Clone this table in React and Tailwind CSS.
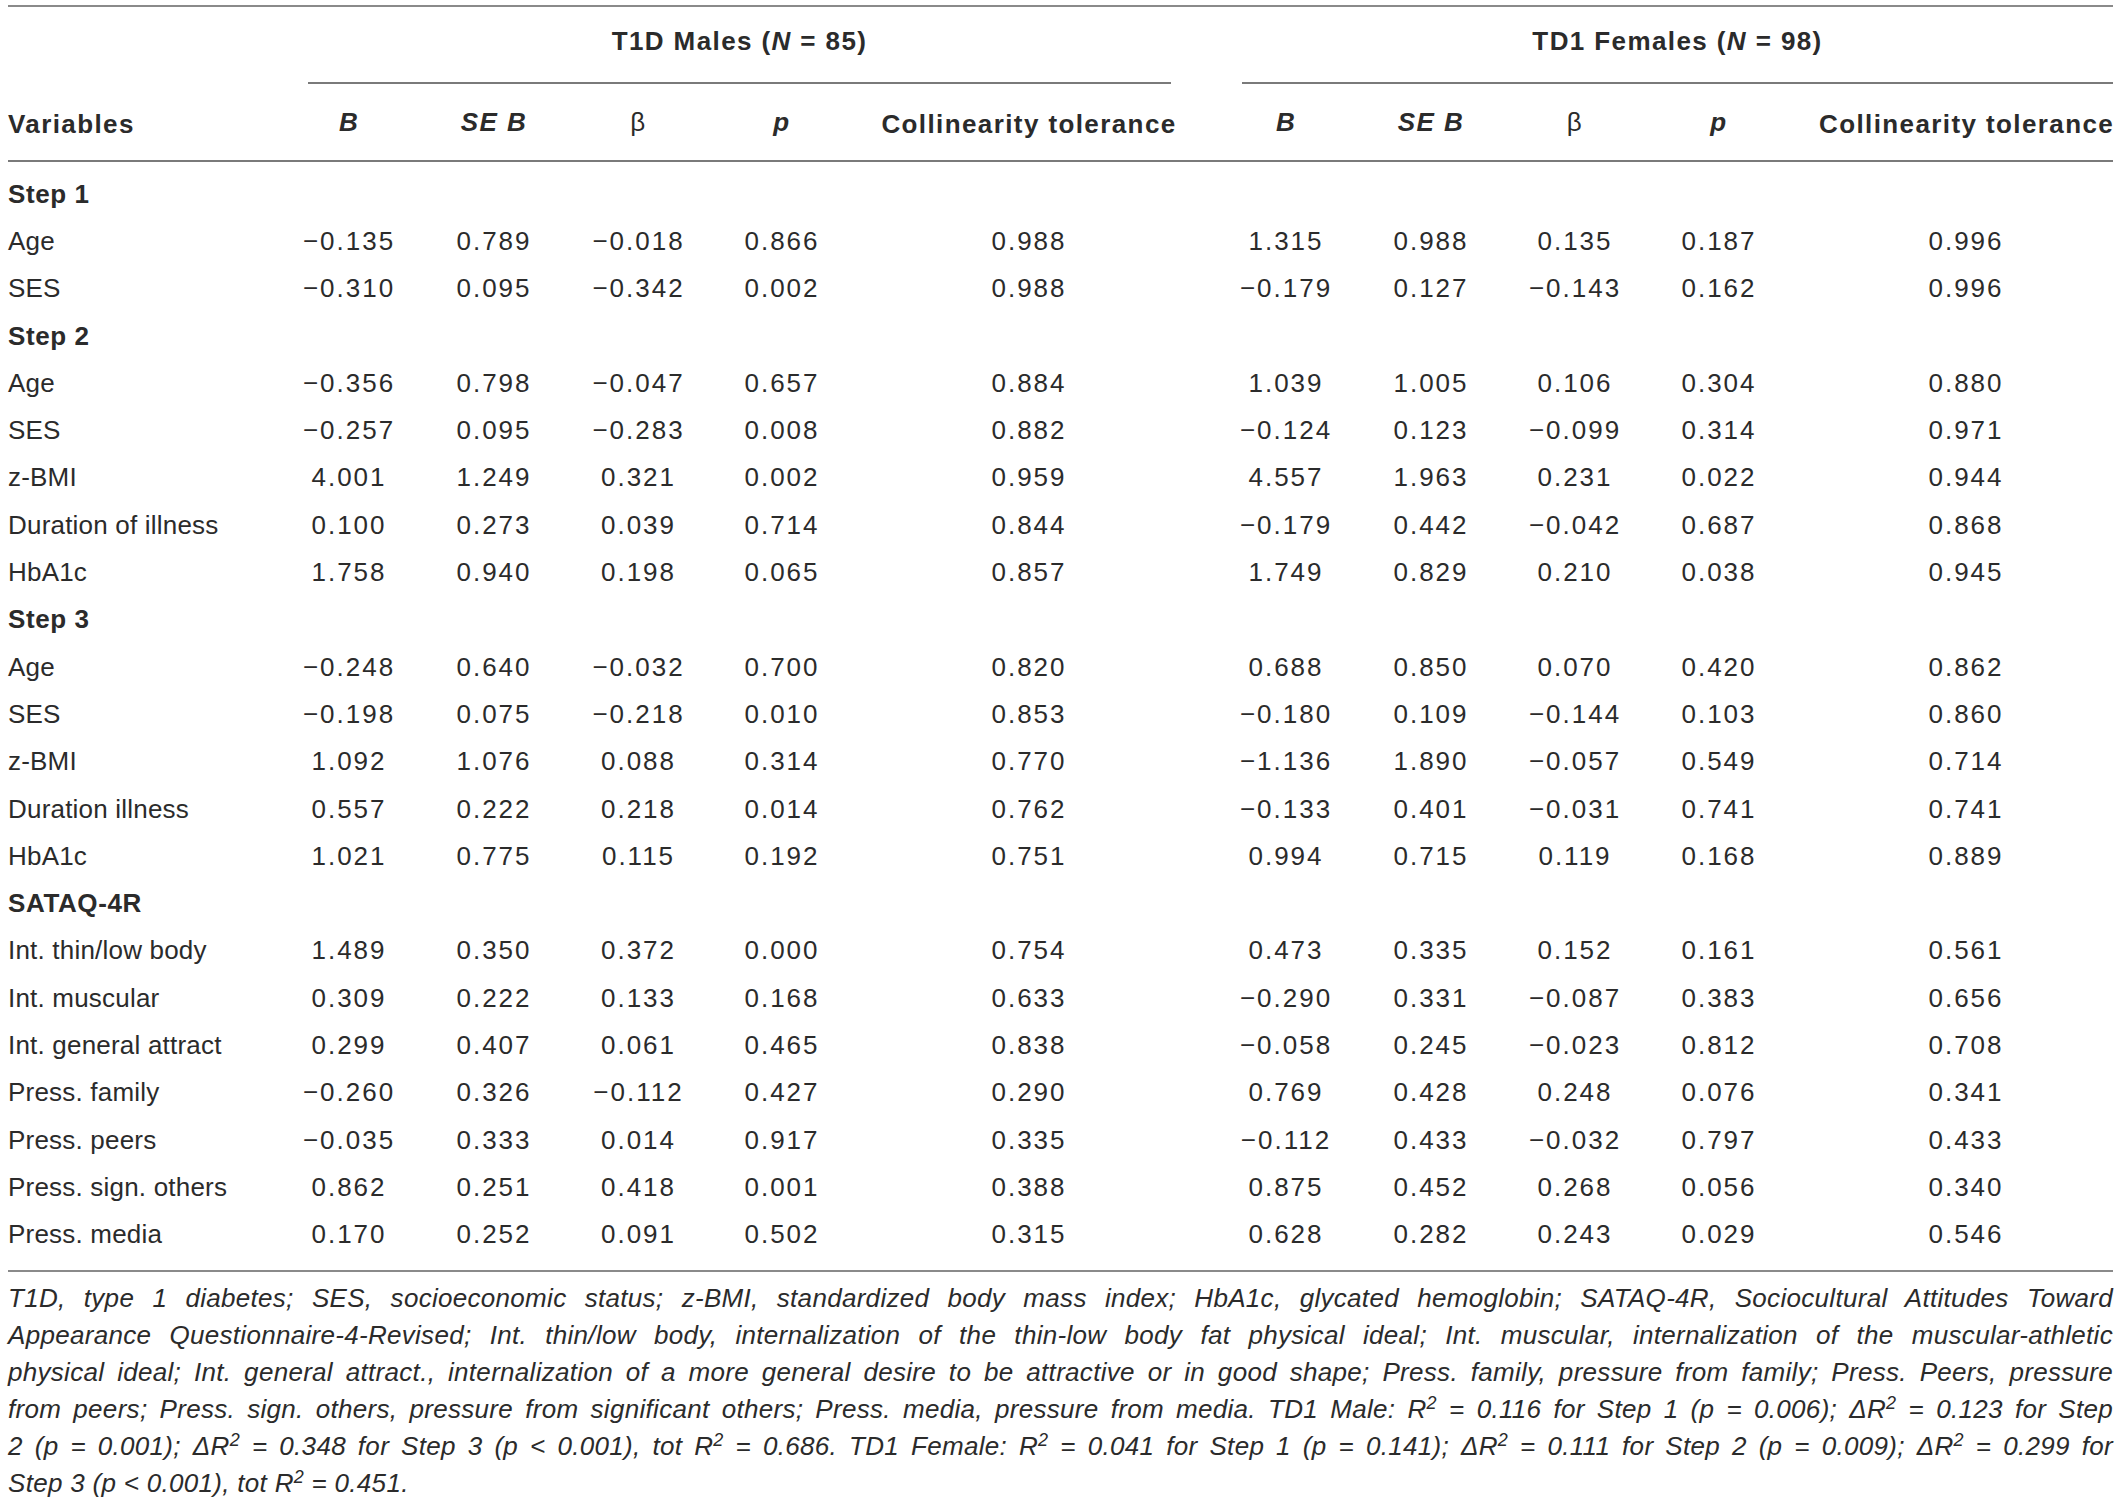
import React from "react";

const rows = [
    { label: "Step 1", step: true },
    { label: "Age", m: ["−0.135", "0.789", "−0.018", "0.866", "0.988"], f: ["1.315", "0.988", "0.135", "0.187", "0.996"] },
    { label: "SES", m: ["−0.310", "0.095", "−0.342", "0.002", "0.988"], f: ["−0.179", "0.127", "−0.143", "0.162", "0.996"] },
    { label: "Step 2", step: true },
    { label: "Age", m: ["−0.356", "0.798", "−0.047", "0.657", "0.884"], f: ["1.039", "1.005", "0.106", "0.304", "0.880"] },
    { label: "SES", m: ["−0.257", "0.095", "−0.283", "0.008", "0.882"], f: ["−0.124", "0.123", "−0.099", "0.314", "0.971"] },
    { label: "z-BMI", m: ["4.001", "1.249", "0.321", "0.002", "0.959"], f: ["4.557", "1.963", "0.231", "0.022", "0.944"] },
    { label: "Duration of illness", m: ["0.100", "0.273", "0.039", "0.714", "0.844"], f: ["−0.179", "0.442", "−0.042", "0.687", "0.868"] },
    { label: "HbA1c", m: ["1.758", "0.940", "0.198", "0.065", "0.857"], f: ["1.749", "0.829", "0.210", "0.038", "0.945"] },
    { label: "Step 3", step: true },
    { label: "Age", m: ["−0.248", "0.640", "−0.032", "0.700", "0.820"], f: ["0.688", "0.850", "0.070", "0.420", "0.862"] },
    { label: "SES", m: ["−0.198", "0.075", "−0.218", "0.010", "0.853"], f: ["−0.180", "0.109", "−0.144", "0.103", "0.860"] },
    { label: "z-BMI", m: ["1.092", "1.076", "0.088", "0.314", "0.770"], f: ["−1.136", "1.890", "−0.057", "0.549", "0.714"] },
    { label: "Duration illness", m: ["0.557", "0.222", "0.218", "0.014", "0.762"], f: ["−0.133", "0.401", "−0.031", "0.741", "0.741"] },
    { label: "HbA1c", m: ["1.021", "0.775", "0.115", "0.192", "0.751"], f: ["0.994", "0.715", "0.119", "0.168", "0.889"] },
    { label: "SATAQ-4R", step: true },
    { label: "Int. thin/low body", m: ["1.489", "0.350", "0.372", "0.000", "0.754"], f: ["0.473", "0.335", "0.152", "0.161", "0.561"] },
    { label: "Int. muscular", m: ["0.309", "0.222", "0.133", "0.168", "0.633"], f: ["−0.290", "0.331", "−0.087", "0.383", "0.656"] },
    { label: "Int. general attract", m: ["0.299", "0.407", "0.061", "0.465", "0.838"], f: ["−0.058", "0.245", "−0.023", "0.812", "0.708"] },
    { label: "Press. family", m: ["−0.260", "0.326", "−0.112", "0.427", "0.290"], f: ["0.769", "0.428", "0.248", "0.076", "0.341"] },
    { label: "Press. peers", m: ["−0.035", "0.333", "0.014", "0.917", "0.335"], f: ["−0.112", "0.433", "−0.032", "0.797", "0.433"] },
    { label: "Press. sign. others", m: ["0.862", "0.251", "0.418", "0.001", "0.388"], f: ["0.875", "0.452", "0.268", "0.056", "0.340"] },
    { label: "Press. media", m: ["0.170", "0.252", "0.091", "0.502", "0.315"], f: ["0.628", "0.282", "0.243", "0.029", "0.546"] },
];

const R2 = () => (
    <>R<sup className="text-[18px]">2</sup></>
);

const ColHeads = () => (
    <>
        <th className="font-bold italic">B</th>
        <th className="font-bold italic">SE B</th>
        <th className="font-normal">β</th>
        <th className="font-bold italic">p</th>
    </>
);

const Line = ({ children, last }) => (
    <div className={last ? "text-left" : "text-justify [text-align-last:justify]"}>{children}</div>
);

const App = () => {
    return (
        <div className="bg-white w-[2121px] h-[1506px] px-2 pt-[5px] text-[#2b2b2b] text-[26px]" style={{ fontFamily: '"Liberation Sans", Arial, sans-serif' }}>
            <table className="w-[2105px] table-fixed border-collapse">
                <colgroup>
                    <col className="w-[269px]" />
                    <col className="w-[144px]" />
                    <col className="w-[146px]" />
                    <col className="w-[143px]" />
                    <col className="w-[144px]" />
                    <col className="w-[350px]" />
                    <col className="w-[164px]" />
                    <col className="w-[126px]" />
                    <col className="w-[162px]" />
                    <col className="w-[126px]" />
                    <col className="w-[331px]" />
                </colgroup>
                <thead className="tracking-[1.4px]">
                    <tr className="border-t-2 border-[#8a8a8a]">
                        <th className="p-0"></th>
                        <th colSpan={5} className="p-0 font-bold">
                            <div className="ml-[31px] mr-[33px] pt-[18px] pb-[25px] leading-[32px] border-b-2 border-[#7a7a7a]">
                                T1D Males (<i>N</i> = 85)
                            </div>
                        </th>
                        <th colSpan={5} className="p-0 font-bold">
                            <div className="ml-[38px] pt-[18px] pb-[25px] leading-[32px] border-b-2 border-[#7a7a7a]">
                                TD1 Females (<i>N</i> = 98)
                            </div>
                        </th>
                    </tr>
                    <tr className="border-b-2 border-[#7a7a7a] h-[77px] leading-[32px] align-middle">
                        <th className="text-left font-bold pt-[4px]">Variables</th>
                        <ColHeads />
                        <th className="font-bold whitespace-nowrap pt-[4px]">Collinearity tolerance</th>
                        <ColHeads />
                        <th className="font-bold whitespace-nowrap pl-[37px] pt-[4px]">Collinearity tolerance</th>
                    </tr>
                </thead>
                <tbody className="border-b-2 border-[#8a8a8a]">
                    <tr className="h-[9px]"><td colSpan={11}></td></tr>
                    {rows.map((row, i) => (
                        <tr key={i} className="h-[47.3px] leading-[32px]">
                            <td className={row.step ? "font-bold whitespace-nowrap tracking-[0.6px]" : "whitespace-nowrap tracking-[0.2px]"}>{row.label}</td>
                            {row.step ? (
                                <td colSpan={10}></td>
                            ) : (
                                <>
                                    {row.m.map((v, j) => (
                                        <td key={"m" + j} className="text-center tracking-[2px]">{v}</td>
                                    ))}
                                    {row.f.map((v, j) => (
                                        <td key={"f" + j} className={j === 4 ? "text-center tracking-[2px] pl-[37px]" : "text-center tracking-[2px]"}>{v}</td>
                                    ))}
                                </>
                            )}
                        </tr>
                    ))}
                    <tr className="h-[13px]"><td colSpan={11}></td></tr>
                </tbody>
            </table>
            <div className="pt-[8px] italic text-[26px] leading-[37px] tracking-[0.3px] w-[2105px]">
                <Line>T1D, type 1 diabetes; SES, socioeconomic status; z-BMI, standardized body mass index; HbA1c, glycated hemoglobin; SATAQ-4R, Sociocultural Attitudes Toward</Line>
                <Line>Appearance Questionnaire-4-Revised; Int. thin/low body, internalization of the thin-low body fat physical ideal; Int. muscular, internalization of the muscular-athletic</Line>
                <Line>physical ideal; Int. general attract., internalization of a more general desire to be attractive or in good shape; Press. family, pressure from family; Press. Peers, pressure</Line>
                <Line>from peers; Press. sign. others, pressure from significant others; Press. media, pressure from media. TD1 Male: <R2 /> = 0.116 for Step 1 (p = 0.006); Δ<R2 /> = 0.123 for Step</Line>
                <Line>2 (p = 0.001); Δ<R2 /> = 0.348 for Step 3 (p &lt; 0.001), tot <R2 /> = 0.686. TD1 Female: <R2 /> = 0.041 for Step 1 (p = 0.141); Δ<R2 /> = 0.111 for Step 2 (p = 0.009); Δ<R2 /> = 0.299 for</Line>
                <Line last>Step 3 (p &lt; 0.001), tot <R2 /> = 0.451.</Line>
            </div>
        </div>
    );
};

export default App;
